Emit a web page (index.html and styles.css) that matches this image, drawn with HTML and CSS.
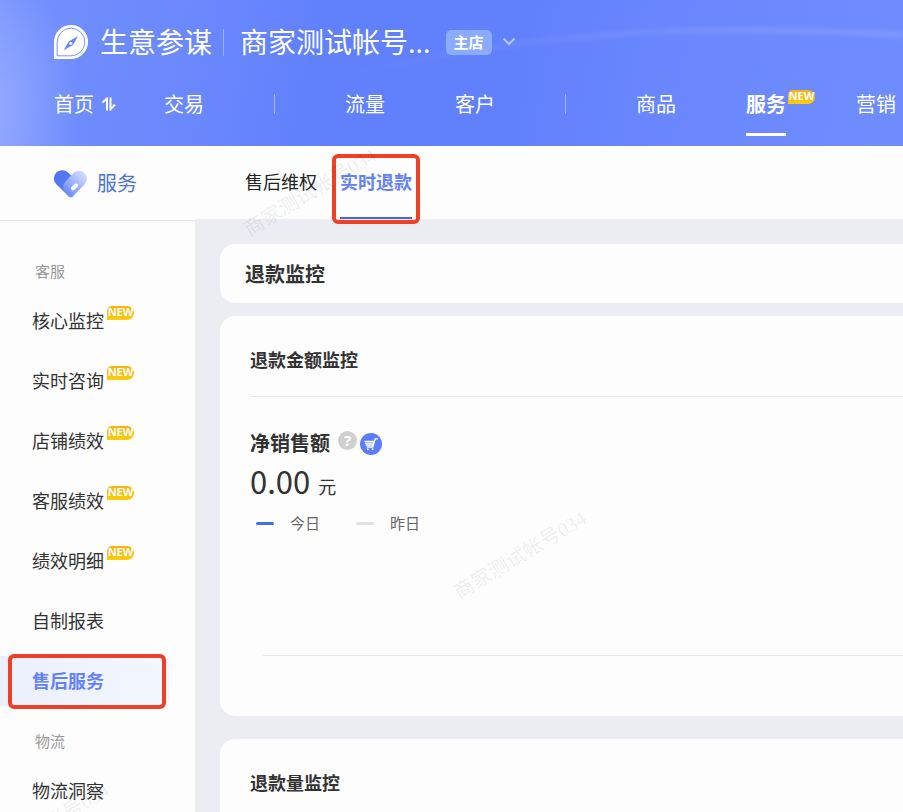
FILE: index.html
```html
<!DOCTYPE html>
<html lang="zh-CN">
<head>
<meta charset="utf-8">
<meta name="viewport" content="width=device-width, initial-scale=1">
<title>生意参谋</title>
<link rel="stylesheet" href="styles.css">
</head>
<body>
<div class="page">
  <header class="header">
    <svg class="header-glow" viewBox="0 0 903 146" preserveAspectRatio="none" aria-hidden="true">
      <defs>
        <linearGradient id="streak" x1="0" x2="1">
          <stop offset="0" stop-color="#fff" stop-opacity="0"/>
          <stop offset=".5" stop-color="#fff" stop-opacity=".07"/>
          <stop offset="1" stop-color="#fff" stop-opacity=".12"/>
        </linearGradient>
        <filter id="soft" x="-5%" y="-50%" width="110%" height="200%"><feGaussianBlur stdDeviation="2"/></filter>
      </defs>
      <path d="M300 86C450 48 620 18 903 35" fill="none" stroke="url(#streak)" stroke-width="6" filter="url(#soft)"/>
    </svg>
    <div class="brand-row">
      <svg class="brand-logo" viewBox="0 0 36 36" aria-hidden="true">
        <path d="M0 35V17.500A17.500 17.500 0 1 1 17.500 35Z" fill="#fff"/>
        <path d="M3.300 31.700V17.500A14.200 14.200 0 1 1 17.500 31.700Z" fill="none" stroke="#7590ff" stroke-width="1"/>
        <path d="M24.500 11.500L19.800 20.300L10 26L15 17Z" fill="#6785fb"/>
        <circle cx="17.300" cy="18.800" r="1.600" fill="#fff"/>
      </svg>
      <span class="brand-name">生意参谋</span>
      <span class="brand-divider"></span>
      <span class="shop-name">商家测试帐号...</span>
      <span class="shop-tag">主店</span>
      <button class="shop-toggle" type="button" aria-label="切换店铺">
        <svg viewBox="0 0 14 10" aria-hidden="true"><path d="M1.500 1.500L7 7L12.500 1.500" fill="none" stroke="#b7c6ff" stroke-width="2"/></svg>
      </button>
    </div>
    <nav class="main-nav">
      <a href="#">首页<svg class="swap-icon" viewBox="0 0 14 14" aria-hidden="true"><path d="M.5 5.500L5 1.500V13.500M8.500 .5V12.500L13 7.500" fill="none" stroke="#fff" stroke-width="2"/></svg></a>
      <a href="#">交易</a>
      <span class="nav-divider"></span>
      <a href="#">流量</a>
      <a href="#">客户</a>
      <span class="nav-divider"></span>
      <a href="#">商品</a>
      <a class="active" href="#">服务<span class="badge-new">NEW</span></a>
      <a href="#">营销</a>
    </nav>
  </header>

  <div class="body">
    <aside class="sidebar">
      <div class="side-title">
        <svg class="heart" viewBox="0 0 34 28" aria-hidden="true">
          <defs>
            <linearGradient id="heartL" x1="0" y1="0" x2="1" y2="1"><stop offset="0" stop-color="#4a70f0"/><stop offset="1" stop-color="#6486fb"/></linearGradient>
            <linearGradient id="heartR" x1="1" y1="0" x2=".1" y2="1"><stop offset="0" stop-color="#dbe4ff"/><stop offset=".5" stop-color="#a3b8fd"/><stop offset="1" stop-color="#5d80f7"/></linearGradient>
          </defs>
          <path d="M2.500 14.500A8 8 0 0 1 14 2.500L24 12L18.500 26.500Q16.500 28 14.800 26.500Z" fill="url(#heartL)"/>
          <path d="M20 2.500A8 8 0 0 1 31 14L18.500 26.700Q16.500 28 14.800 26.500L10.500 21.500Q7.500 17 11 12Z" fill="url(#heartR)"/>
          <path d="M19 18.300L22 15.500" stroke="#fff" stroke-width="4" stroke-linecap="round"/>
        </svg>
        <span>服务</span>
      </div>
      <nav class="side-nav">
        <h2>客服</h2>
        <a href="#"><span>核心监控<span class="badge-new">NEW</span></span></a>
        <a href="#"><span>实时咨询<span class="badge-new">NEW</span></span></a>
        <a href="#"><span>店铺绩效<span class="badge-new">NEW</span></span></a>
        <a href="#"><span>客服绩效<span class="badge-new">NEW</span></span></a>
        <a href="#"><span>绩效明细<span class="badge-new">NEW</span></span></a>
        <a href="#"><span>自制报表</span></a>
        <a class="active" href="#"><span>售后服务</span></a>
        <h2>物流</h2>
        <a href="#"><span>物流洞察</span></a>
      </nav>
    </aside>

    <main class="main">
      <nav class="tabs">
        <a href="#">售后维权</a>
        <a class="active" href="#">实时退款</a>
      </nav>
      <div class="content">
        <section class="card card-title"><h1>退款监控</h1></section>
        <section class="card card-amount">
          <h2>退款金额监控</h2>
          <div class="metric-head">
            <h3>净销售额</h3>
            <button class="help" type="button" aria-label="说明">?</button>
            <svg class="cart" viewBox="0 0 22 22" aria-hidden="true">
              <circle cx="11" cy="11" r="11" fill="#5b7dfa"/>
              <path d="M18 5.800H15.200L12.800 14H6.800M4.500 8.300H14M5 10.200H13.600M5.600 12H13" fill="none" stroke="#fff" stroke-width="1.300"/>
              <circle cx="7.800" cy="16.200" r="1" fill="#fff"/><circle cx="12.500" cy="16.200" r="1" fill="#fff"/>
            </svg>
          </div>
          <p class="metric-value">0.00<span>元</span></p>
          <ul class="legend">
            <li class="today">今日</li>
            <li class="yesterday">昨日</li>
          </ul>
          <div class="chart"></div>
        </section>
        <section class="card card-count"><h2>退款量监控</h2></section>
      </div>
    </main>
  </div>

  <div class="watermarks" aria-hidden="true">
    <span class="mark mark-a">商家测试帐号034</span>
    <span class="mark mark-b">商家测试帐号034</span>
    <span class="mark mark-c">商家测试帐号034</span>
  </div>
</div>
</body>
</html>
```
FILE: styles.css
```css
* { box-sizing: border-box; }

body {
  margin: 0;
  background: #ebedf3;
  color: #333;
  font-family: "Noto Sans", "Noto Sans CJK SC", sans-serif;
  font-size: 18px;
  line-height: 24px;
}

a { color: inherit; text-decoration: none; }
h1, h2, h3, p, ul { margin: 0; padding: 0; }
button { border: 0; padding: 0; font: inherit; }

.page {
  position: relative;
  min-height: 100vh;
  overflow: hidden;
  display: flex;
  flex-direction: column;
}

/* Header */
.header {
  position: relative;
  height: 146px;
  padding: 18px 0 0 54px;
  color: #fff;
  background:
    radial-gradient(ellipse 110px 150px at -30px 110px, rgba(255, 255, 255, .28), rgba(255, 255, 255, 0)),
    linear-gradient(100deg, #7893ff 0, #6f8cfd 10%, #6b88fd 22%, #6080fc 36%, #6080fc 55%, #6a87fd 75%, #6f8cff 100%);
}
.header-glow { position: absolute; inset: 0; width: 100%; height: 100%; }

.brand-row {
  position: relative;
  display: flex;
  align-items: center;
  height: 48px;
  white-space: nowrap;
}
.brand-logo { width: 35px; height: 35px; margin-right: 11px; flex: none; }
.brand-name, .shop-name { font-size: 28px; line-height: 40px; }
.brand-divider { width: 1px; height: 27px; margin: 0 16px 0 11px; background: rgba(255, 255, 255, .35); }
.shop-tag {
  margin-left: 15px;
  padding: 0 8px;
  border-radius: 5px;
  background: #8aabff;
  font-size: 15px;
  font-weight: 700;
  line-height: 25px;
}
.shop-toggle { display: flex; margin-left: 10px; background: none; }
.shop-toggle svg { width: 14px; height: 10px; }

.main-nav {
  position: relative;
  display: flex;
  align-items: center;
  gap: 70px;
  height: 76px;
  font-size: 20px;
  white-space: nowrap;
}
.main-nav a { position: relative; flex: none; line-height: 65px; height: 64px; }
.main-nav .active { font-weight: 700; border-bottom: 3px solid #fff; }
.nav-divider { width: 1px; height: 20px; flex: none; background: rgba(255, 255, 255, .4); }
.swap-icon { position: absolute; left: 48px; top: 25px; width: 14px; height: 14px; }

.badge-new {
  position: absolute;
  left: 100%;
  top: -3px;
  margin-left: 3px;
  width: 27px;
  height: 14px;
  border-radius: 5px 7px 7px 0;
  background: linear-gradient(#f9b112, #fbcc0c);
  color: #fff;
  font-size: 11px;
  font-weight: 700;
  line-height: 12px;
  text-align: center;
}
.main-nav .badge-new { top: 18px; margin-left: 2px; }

/* Layout */
.body { flex: 1; display: flex; }
.sidebar { width: 195px; flex: none; background: #fdfdfe; }
.main { flex: 1; min-width: 0; display: flex; flex-direction: column; }

.side-title {
  display: flex;
  align-items: center;
  gap: 9px;
  height: 75px;
  padding: 2px 0 0 54px;
  border-bottom: 1px solid #e3e5f0;
  color: #4e72d8;
  font-size: 20px;
}
.heart { width: 34px; height: 28px; }

.side-nav { display: flex; flex-direction: column; gap: 10px; padding-top: 25px; }
.side-nav h2 {
  margin-top: 10px;
  padding-left: 35px;
  color: #999;
  font-size: 15px;
  font-weight: 400;
  line-height: 30px;
}
.side-nav a {
  position: relative;
  height: 50px;
  margin-right: 26px;
  padding: 13px 0 0 32px;
  border-radius: 0 8px 8px 0;
}
.side-nav a > span { position: relative; display: inline-block; }
.side-nav .active { background: linear-gradient(90deg, #eceffc, #f2f7ff); color: #6482f8; font-weight: 700; }

/* Highlight frames */
.side-nav .active::after,
.tabs .active::after {
  content: "";
  position: absolute;
  border: 4px solid #ee4027;
  border-radius: 6px;
}
.side-nav .active::after { inset: -2px 3px -3px 8px; }
.tabs .active::after { inset: 8px -8px -7px; }

.tabs {
  display: flex;
  gap: 23px;
  height: 73px;
  padding-left: 50px;
  background: #fdfdfe;
  color: #222;
  line-height: 73px;
  white-space: nowrap;
}
.tabs .active { position: relative; border-bottom: 2px solid #3f68e4; color: #6482f8; font-weight: 700; }

.content { display: flex; flex-direction: column; flex: 1; padding: 25px 0 0 25px; }
.card { border-radius: 15px 0 0 15px; background: #fdfdfe; }
.card-title { height: 59px; margin-bottom: 13px; padding: 0 25px; }
.card-title h1 { font-size: 20px; line-height: 61px; }
.card-amount { margin-bottom: 23px; padding: 0 0 60px 30px; }
.card h2 { font-size: 18px; line-height: 88px; height: 81px; }
.card-amount h2 { border-bottom: 1px solid #e8e8ea; }
.card-count { flex: 1; padding-left: 30px; border-radius: 15px 0 0 0; }

.metric-head { display: flex; align-items: center; height: 30px; margin-top: 32px; }
.metric-head h3 { font-size: 20px; line-height: 30px; }
.help {
  width: 19px;
  height: 19px;
  margin: 0 3px 7px 8px;
  border-radius: 50%;
  background: #d0d0d0;
  color: #fff;
  font-size: 15px;
  font-weight: 700;
  line-height: 19px;
}
.cart { width: 22px; height: 22px; }
.metric-value {
  display: flex;
  align-items: baseline;
  gap: 8px;
  font-family: "Noto Sans CJK SC", sans-serif;
  font-size: 31px;
  line-height: 43px;
}
.metric-value span { font-size: 18px; }

.legend { display: flex; gap: 36px; padding-left: 6px; color: #666; font-size: 15px; line-height: 30px; list-style: none; }
.legend li { display: flex; align-items: center; gap: 16px; }
.legend li::before { content: ""; width: 18px; height: 3px; border-radius: 2px; background: #3f6fec; }
.legend .yesterday::before { background: #e2e2e2; }
.chart { height: 118px; margin-left: 13px; border-bottom: 1px solid #e8e8ea; }

/* Watermarks */
.watermarks { position: absolute; inset: 0; pointer-events: none; overflow: hidden; }
.mark {
  position: absolute;
  color: rgba(0, 0, 0, .08);
  font-family: "Liberation Serif", "Noto Sans CJK SC", serif;
  font-size: 20px;
  transform: rotate(-31deg);
  white-space: nowrap;
}
.mark-a { left: 235px; top: 180px; }
.mark-b { left: 445px; top: 543px; }
.mark-c { left: -32px; top: 815px; }
```
